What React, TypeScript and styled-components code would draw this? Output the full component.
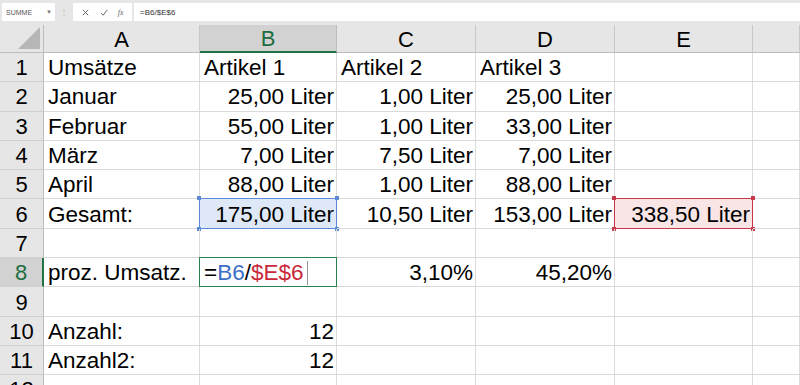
import styled, { createGlobalStyle } from 'styled-components';

const GlobalStyle = createGlobalStyle`
  html, body {
    margin: 0;
    padding: 0;
    background: #ffffff;
    overflow: hidden;
  }
  body {
    font-family: "Liberation Sans", Arial, sans-serif;
  }
`;

const Page = styled.div`
  width: 800px;
  height: 385px;
  overflow: hidden;
  display: flex;
  flex-direction: column;
`;

/* obere Formelleiste */
const Toolbar = styled.div`
  height: 25px;
  flex: none;
  background: #e6e6e6;
  display: flex;
  align-items: flex-start;
  padding-top: 3px;
  box-sizing: border-box;
`;

const NameBox = styled.div`
  width: 53px;
  height: 18px;
  margin-left: 2px;
  background: #fff;
  display: flex;
  align-items: center;
  justify-content: space-between;
  padding: 0 3px 0 4px;
  box-sizing: border-box;
  font-size: 7px;
  color: #555;
`;

const Caret = styled.span`
  font-size: 6px;
  color: #777;
`;

const Dots = styled.div`
  width: 18px;
  height: 18px;
  display: flex;
  align-items: center;
  justify-content: center;
  color: #aaa;
  font-size: 8px;
`;

const IconBox = styled.div`
  width: 59px;
  height: 18px;
  background: #fff;
  display: flex;
  align-items: center;
  justify-content: space-around;
  padding: 0 4px;
  box-sizing: border-box;
  color: #666;
`;

const FxLabel = styled.span`
  font-family: "Liberation Serif", serif;
  font-style: italic;
  font-size: 8px;
  color: #666;
`;

const FormulaBox = styled.div`
  flex: 1;
  height: 18px;
  margin-left: 2px;
  background: #fff;
  display: flex;
  align-items: center;
  padding-left: 6px;
  font-size: 8px;
  color: #333;
`;

const Sheet = styled.div`
  display: grid;
  grid-template-columns: 44px 156px 137px 139px 139px 138px 47px;
  grid-template-rows: 28px;
  grid-auto-rows: 29.3px;
  font-size: 22.5px;
  color: #000;
`;

const Corner = styled.div`
  background: #e6e6e6;
  border-right: 1px solid #bdbdbd;
  border-bottom: 1px solid #bdbdbd;
  position: relative;
  box-sizing: border-box;
`;

const CornerTriangle = styled.div`
  position: absolute;
  right: 3px;
  bottom: 3px;
  width: 0;
  height: 0;
  border-left: 22px solid transparent;
  border-bottom: 22px solid #b7b7b7;
`;

const ColHead = styled.div<{ $active?: boolean }>`
  background: ${(p) => (p.$active ? '#d2d2d2' : '#e6e6e6')};
  color: ${(p) => (p.$active ? '#1e6b40' : '#000')};
  border-right: 1px solid ${(p) => (p.$active ? '#bdbdbd' : '#c8c8c8')};
  border-bottom: ${(p) => (p.$active ? '2px solid #217346' : '1px solid #bdbdbd')};
  box-sizing: border-box;
  display: flex;
  align-items: center;
  justify-content: center;
  padding-top: 2px;
  font-size: 22px;
`;

const RowHead = styled.div<{ $active?: boolean }>`
  background: ${(p) => (p.$active ? '#d2d2d2' : '#e6e6e6')};
  color: ${(p) => (p.$active ? '#1e6b40' : '#000')};
  border-right: ${(p) => (p.$active ? '2px solid #217346' : '1px solid #bdbdbd')};
  border-bottom: 1px solid #cfcfcf;
  box-sizing: border-box;
  display: flex;
  align-items: center;
  justify-content: center;
  padding-top: 2px;
  font-size: 22px;
`;

type Mark = 'none' | 'blue' | 'red' | 'edit';

const markFill: Record<Mark, string> = {
  none: 'transparent',
  blue: '#dfe8f6',
  red: '#f9e5e6',
  edit: 'transparent',
};

const markBorder: Record<Mark, string> = {
  none: 'transparent',
  blue: '#5b8bd6',
  red: '#c6394b',
  edit: '#2a8050',
};

const Cell = styled.div<{ $right?: boolean; $mark?: Mark }>`
  position: relative;
  box-sizing: border-box;
  border-right: 1px solid #dadada;
  border-bottom: 1px solid #dadada;
  display: flex;
  align-items: center;
  justify-content: ${(p) => (p.$right ? 'flex-end' : 'flex-start')};
  padding: 2px ${(p) => (p.$right ? '2px' : '0')} 0 ${(p) => (p.$right ? '0' : '4px')};
  white-space: nowrap;
  background: ${(p) => markFill[p.$mark ?? 'none']};
`;

const Frame = styled.div<{ $mark: Mark }>`
  position: absolute;
  left: -1px;
  top: -1px;
  right: -1px;
  bottom: -1px;
  border: 1px solid ${(p) => markBorder[p.$mark]};
  pointer-events: none;
`;

const Handle = styled.span<{ $mark: Mark; $pos: 'tl' | 'tr' | 'bl' | 'br' }>`
  position: absolute;
  width: 4px;
  height: 4px;
  background: ${(p) => markBorder[p.$mark]};
  ${(p) => (p.$pos[0] === 't' ? 'top: -3px;' : 'bottom: -3px;')}
  ${(p) => (p.$pos[1] === 'l' ? 'left: -3px;' : 'right: -3px;')}
`;

const Ref = styled.span<{ $color: string }>`
  color: ${(p) => p.$color};
`;

const Cursor = styled.span`
  display: inline-block;
  width: 1px;
  height: 24px;
  background: #999;
  margin-left: 3px;
`;

type Row = { n: number; cells: (string | null)[] };

const rows: Row[] = [
  { n: 1, cells: ['Umsätze', 'Artikel 1', 'Artikel 2', 'Artikel 3', null, null] },
  { n: 2, cells: ['Januar', '25,00 Liter', '1,00 Liter', '25,00 Liter', null, null] },
  { n: 3, cells: ['Februar', '55,00 Liter', '1,00 Liter', '33,00 Liter', null, null] },
  { n: 4, cells: ['März', '7,00 Liter', '7,50 Liter', '7,00 Liter', null, null] },
  { n: 5, cells: ['April', '88,00 Liter', '1,00 Liter', '88,00 Liter', null, null] },
  { n: 6, cells: ['Gesamt:', '175,00 Liter', '10,50 Liter', '153,00 Liter', '338,50 Liter', null] },
  { n: 7, cells: [null, null, null, null, null, null] },
  { n: 8, cells: ['proz. Umsatz.', 'FORMULA', '3,10%', '45,20%', null, null] },
  { n: 9, cells: [null, null, null, null, null, null] },
  { n: 10, cells: ['Anzahl:', '12', null, null, null, null] },
  { n: 11, cells: ['Anzahl2:', '12', null, null, null, null] },
  { n: 12, cells: [null, null, null, null, null, null] },
];

const markOf = (r: number, c: number): Mark => {
  if (r === 6 && c === 1) return 'blue';
  if (r === 6 && c === 4) return 'red';
  if (r === 8 && c === 1) return 'edit';
  return 'none';
};

const XIcon = () => (
  <svg width="9" height="9" viewBox="0 0 10 10">
    <path d="M2 2 L8 8 M8 2 L2 8" stroke="#666" strokeWidth="1.1" fill="none" />
  </svg>
);

const CheckIcon = () => (
  <svg width="10" height="9" viewBox="0 0 10 10">
    <path d="M1.5 5.5 L4 8 L8.8 2" stroke="#666" strokeWidth="1.1" fill="none" />
  </svg>
);

const Formula = () => (
  <>
    =<Ref $color="#3b6fc6">B6</Ref>/<Ref $color="#c8283a">$E$6</Ref>
    <Cursor />
  </>
);

export default function App() {
  return (
    <Page>
      <GlobalStyle />
      <Toolbar>
        <NameBox>
          SUMME
          <Caret>▼</Caret>
        </NameBox>
        <Dots>⋮</Dots>
        <IconBox>
          <XIcon />
          <CheckIcon />
          <FxLabel>fx</FxLabel>
        </IconBox>
        <FormulaBox>=B6/$E$6</FormulaBox>
      </Toolbar>
      <Sheet>
        <Corner>
          <CornerTriangle />
        </Corner>
        {['A', 'B', 'C', 'D', 'E', ''].map((l) => (
          <ColHead key={l || 'F'} $active={l === 'B'}>
            {l}
          </ColHead>
        ))}
        {rows.map((row) => (
          <>
            <RowHead key={`h${row.n}`} $active={row.n === 8}>
              {row.n}
            </RowHead>
            {row.cells.map((v, c) => {
              const mark = markOf(row.n, c);
              const right = c > 0 && row.n !== 1 && v !== 'FORMULA';
              return (
                <Cell key={`${row.n}-${c}`} $right={right} $mark={mark}>
                  {v === 'FORMULA' ? <Formula /> : v}
                  {mark !== 'none' && <Frame $mark={mark} />}
                  {(mark === 'blue' || mark === 'red') &&
                    (['tl', 'tr', 'bl', 'br'] as const).map((p) => (
                      <Handle key={p} $mark={mark} $pos={p} />
                    ))}
                </Cell>
              );
            })}
          </>
        ))}
      </Sheet>
    </Page>
  );
}
